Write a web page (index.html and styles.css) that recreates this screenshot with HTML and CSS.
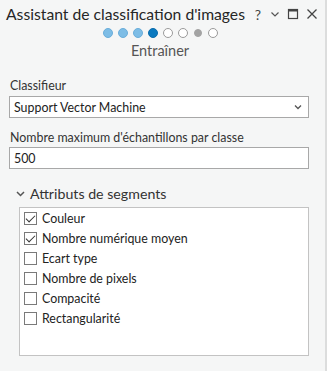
FILE: index.html
```html
<!DOCTYPE html>
<html lang="fr">
<head>
    <meta charset="UTF-8">
    <title>Assistant de classification d'images</title>
    <link rel="stylesheet" href="styles.css">
</head>
<body>
    <div class="pane">
        <div class="pane-main">
            <div class="title-bar">
                <h1>Assistant de classification d'images</h1>
                <div class="title-tools">
                    <span class="tool help">?</span>
                    <svg class="tool" width="10" height="10" viewBox="0 0 10 10"><path d="M1.5 3.5 L5 7 L8.5 3.5" fill="none" stroke="#555" stroke-width="1.2"/></svg>
                    <svg class="tool" width="12" height="12" viewBox="0 0 12 12"><rect x="1.5" y="1.5" width="9" height="9" fill="none" stroke="#444" stroke-width="1.2"/><rect x="1.5" y="1.5" width="9" height="2" fill="#444"/></svg>
                    <svg class="tool" width="12" height="12" viewBox="0 0 12 12"><path d="M1.5 1.5 L10.5 10.5 M10.5 1.5 L1.5 10.5" stroke="#444" stroke-width="1.3"/></svg>
                </div>
            </div>

            <div class="steps">
                <span class="dot done"></span>
                <span class="dot done"></span>
                <span class="dot done"></span>
                <span class="dot current"></span>
                <span class="dot"></span>
                <span class="dot"></span>
                <span class="dot skip"></span>
                <span class="dot"></span>
            </div>
            <div class="step-name">Entraîner</div>

            <div class="field">
                <label for="classifier">Classifieur</label>
                <div class="select">
                    <span id="classifier">Support Vector Machine</span>
                    <svg width="8" height="6" viewBox="0 0 8 6"><path d="M1 1.5 L4 4.5 L7 1.5" fill="none" stroke="#555" stroke-width="1.3"/></svg>
                </div>
            </div>

            <div class="field">
                <label for="samples">Nombre maximum d'échantillons par classe</label>
                <div class="text-input" id="samples">500</div>
            </div>

            <div class="group">
                <div class="group-head">
                    <svg width="9" height="6" viewBox="0 0 9 6"><path d="M1 1 L4.5 4.5 L8 1" fill="none" stroke="#555" stroke-width="1.5"/></svg>
                    <span>Attributs de segments</span>
                </div>
                <ul class="check-list">
                    <li><span class="box checked"></span>Couleur</li>
                    <li><span class="box checked"></span>Nombre numérique moyen</li>
                    <li><span class="box"></span>Ecart type</li>
                    <li><span class="box"></span>Nombre de pixels</li>
                    <li><span class="box"></span>Compacité</li>
                    <li><span class="box"></span>Rectangularité</li>
                </ul>
            </div>
        </div>
        <div class="pane-edge"></div>
    </div>
</body>
</html>
```

FILE: styles.css
```css
* {
    margin: 0;
    padding: 0;
    box-sizing: border-box;
}
body {
    font-family: Lato, Roboto, sans-serif;
    background: #f5f6f6;
    color: #2b2b2b;
    width: 327px;
    height: 371px;
    overflow: hidden;
}
.pane {
    display: flex;
    height: 100%;
}
.pane-main {
    flex: 1;
    min-width: 0;
    padding: 0 16px 0 9px;
}
.pane-edge {
    width: 2px;
    background: #dcdddd;
}

/* Title */
.title-bar {
    display: flex;
    align-items: center;
    height: 27px;
    padding-top: 1px;
}
.title-bar h1 {
    flex: 1;
    min-width: 0;
    font-size: 15.7px;
    font-weight: 400;
    margin-left: -3px;
    color: #262626;
    white-space: nowrap;
}
.title-tools {
    flex-shrink: 0;
    display: flex;
    align-items: center;
    gap: 7px;
    margin-right: -9px;
}
.help {
    font-size: 14px;
    color: #444;
    width: 10px;
    text-align: center;
}

/* Step dots */
.steps {
    display: flex;
    justify-content: center;
    align-items: center;
    gap: 5px;
    margin-top: 1px;
    height: 10px;
    margin-left: 2px;
}
.dot {
    width: 10px;
    height: 10px;
    border-radius: 50%;
    border: 1px solid #9a9a9a;
    background: #fff;
}
.dot.done {
    background: #7dbde6;
    border-color: #6aaedb;
}
.dot.current {
    background: #0a79bf;
    border-color: #0a6dac;
}
.dot.skip {
    width: 8px;
    height: 8px;
    margin: 0 1px;
    background: #a3a3a3;
    border-color: #a3a3a3;
}
.step-name {
    text-align: center;
    font-size: 14.5px;
    color: #555;
    margin-top: 3px;
    margin-left: 2px;
    line-height: 20px;
}

/* Fields */
.field {
    margin-top: 16px;
}
.field + .field {
    margin-top: 11px;
}
.field label {
    display: block;
    font-size: 12.4px;
    line-height: 18px;
    margin-left: 1px;
    color: #333;
}
.select,
.text-input {
    display: flex;
    align-items: center;
    height: 22px;
    border: 1px solid #a8a8a8;
    background: #fff;
    font-size: 12.4px;
    padding: 0 6px 0 4px;
    color: #222;
}
.select {
    margin-top: 1px;
}
.select span {
    flex: 1;
}

/* Attribute group */
.group {
    margin-top: 15px;
}
.group-head {
    display: flex;
    align-items: center;
    gap: 5px;
    padding-left: 7px;
    font-size: 14.2px;
    color: #333;
    line-height: 20px;
}
.check-list {
    list-style: none;
    margin: 3px 0 0 10px;
    height: 149px;
    border: 1px solid #c3c3c3;
    background: #fff;
}
.check-list li {
    display: flex;
    align-items: center;
    gap: 5px;
    height: 20px;
    padding-left: 4px;
    font-size: 12.4px;
    color: #222;
}
.box {
    width: 13px;
    height: 13px;
    border: 1px solid #7a7a7a;
    background: #fff;
    position: relative;
}
.box.checked::after {
    content: "";
    position: absolute;
    left: 3px;
    top: 0;
    width: 4px;
    height: 8px;
    border: solid #333;
    border-width: 0 1.5px 1.5px 0;
    transform: rotate(45deg);
}
```
